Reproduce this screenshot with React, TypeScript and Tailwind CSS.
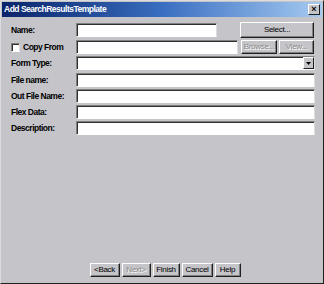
import React from "react";

const label = "text-[8.5px] font-bold tracking-[-0.5px] text-black";
const sunken =
  "h-[14px] bg-white border border-t-[#808080] border-l-[#808080] border-b-white border-r-[#dcdcdc] shadow-[inset_1px_1px_0_#303030]";
const raised =
  "flex items-center justify-center bg-[#c5c4c9] border border-t-white border-l-white border-b-[#202020] border-r-[#202020] shadow-[inset_-1px_-1px_0_#808080] text-[8px] tracking-[-0.3px]";
const disabled = "text-[#8a8a8a] [text-shadow:1px_1px_0_#fff]";

const Field = ({ name }: { name: string }) => (
  <div className="flex items-center h-[14px]">
    <span className={`w-[65px] ${label}`}>{name}</span>
    <div className={`flex-1 ${sunken}`} />
  </div>
);

export default function App() {
  return (
    <div
      className="w-[324px] h-[284px] flex flex-col bg-[#c5c4c9] border border-t-[#dcdcdc] border-l-[#dcdcdc] border-b-[#202020] border-r-[#202020]"
      style={{ fontFamily: '"Liberation Sans", Arial, sans-serif' }}
    >
      {/* title bar */}
      <div className="mx-[1px] mt-[1px] h-[15px] flex items-center justify-between px-[2px] bg-gradient-to-r from-[#0a246a] via-[#3a6ec0] to-[#a6caf0]">
        <span className="text-[8.5px] font-bold tracking-[-0.5px] text-white">
          Add SearchResultsTemplate
        </span>
        <div className="w-[12px] h-[11px] flex items-center justify-center bg-[#c5c4c9] border border-t-white border-l-white border-b-[#202020] border-r-[#202020] text-[9px] font-bold leading-none">
          ×
        </div>
      </div>

      {/* form */}
      <div className="flex flex-col gap-[2px] pl-[10px] pr-[8px] mt-[5px]">
        <div className="flex items-center h-[16px]">
          <span className={`w-[65px] ${label}`}>Name:</span>
          <div className={`w-[141px] ${sunken}`} />
          <div className={`ml-auto mr-[1px] w-[74px] h-[16px] ${raised}`}>Select...</div>
        </div>
        <div className="flex items-center h-[14px]">
          <span className={`w-[65px] flex items-center gap-[3px] ${label}`}>
            <span className="w-[9px] h-[9px] bg-white border border-t-[#808080] border-l-[#808080] border-b-white border-r-[#dcdcdc] shadow-[inset_1px_1px_0_#303030]" />
            Copy From
          </span>
          <div className={`w-[162px] ${sunken}`} />
          <div className={`ml-auto w-[36px] h-[14px] ${disabled} ${raised}`}>Browse...</div>
          <div className={`ml-[2px] mr-[1px] w-[35px] h-[14px] ${disabled} ${raised}`}>View...</div>
        </div>
        <div className="flex items-center h-[14px]">
          <span className={`w-[65px] ${label}`}>Form Type:</span>
          <div className={`flex-1 flex justify-end items-stretch ${sunken}`}>
            <div className="w-[11px] flex items-center justify-center bg-[#c5c4c9] border border-t-white border-l-white border-b-[#202020] border-r-[#202020]">
              <svg width="5" height="3" viewBox="0 0 5 3">
                <path d="M0 0h5L2.5 3z" fill="#000" />
              </svg>
            </div>
          </div>
        </div>
        <div className="mt-[1px] flex flex-col gap-[2px]">
          <Field name="File name:" />
          <Field name="Out File Name:" />
          <Field name="Flex Data:" />
          <Field name="Description:" />
        </div>
      </div>

      {/* buttons */}
      <div className="mt-auto mb-[6px] flex justify-center gap-[2px] pl-[6px]">
        <div className={`w-[30px] h-[14px] ${raised}`}>&lt;Back</div>
        <div className={`w-[29px] h-[14px] ${disabled} ${raised}`}>Next&gt;</div>
        <div className={`w-[27px] h-[14px] ${raised}`}>Finish</div>
        <div className={`w-[31px] h-[14px] ${raised}`}>Cancel</div>
        <div className={`w-[26px] h-[14px] ${raised}`}>Help</div>
      </div>
    </div>
  );
}
